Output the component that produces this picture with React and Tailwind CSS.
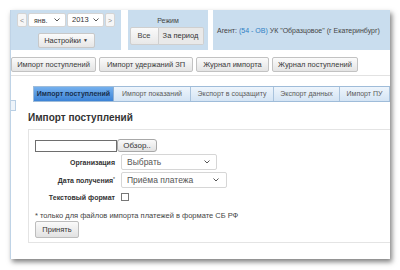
const Chevron = ({ className = "" }) => (
  <svg width="6" height="4" viewBox="0 0 6 4" className={className}>
    <path d="M0.5 0.5 L3 3 L5.5 0.5" fill="none" stroke="#555" strokeWidth="1" />
  </svg>
);

const ToolBtn = ({ children, w }) => (
  <div
    className={`h-[15px] ${w} flex items-center justify-center border border-[#c2c2c2] rounded-[2px] bg-gradient-to-b from-[#fbfbfb] to-[#e4e4e4] text-[7.5px] text-[#3a3a3a] leading-none`}
  >
    {children}
  </div>
);

const Tab = ({ children, w, active }) =>
  active ? (
    <div
      className={`${w} h-full flex items-center justify-center bg-gradient-to-b from-[#74b0ee] to-[#3c83d6] text-[7px] font-bold text-[#17304f] border-r border-[#8fb0d2]`}
    >
      {children}
    </div>
  ) : (
    <div
      className={`${w} h-full flex items-center justify-center text-[7px] text-[#5a5a5a] border-r border-[#a9c3dd] shrink-0`}
    >
      {children}
    </div>
  );

export default function App() {
  return (
    <div
      className="w-[400px] h-[270px] bg-white overflow-hidden pt-[10px] pl-[10px]"
      style={{ fontFamily: '"Liberation Sans", Arial, sans-serif' }}
    >
      <div className="w-[380px] h-[249px] bg-white flex flex-col shadow-[2px_3px_5px_rgba(0,0,0,0.5)] relative border-l border-[#bfd3e6]">
        {/* header */}
        <div className="h-[40px] flex shrink-0">
          <div className="w-[110px] bg-[#c9ddee] flex flex-col items-center pt-[3px]">
            <div className="flex items-center h-[14px] gap-[1px] w-[98px]">
              <div className="w-[10px] h-[14px] bg-[#f6f6f6] border border-[#d4d4d4] rounded-[2px] flex items-center justify-center text-[7px] text-[#888] leading-none">
                &lt;
              </div>
              <div className="w-[38px] h-[14px] bg-white border border-[#d4d4d4] rounded-[2px] flex items-center justify-between px-[5px] text-[7px] text-[#333] leading-none">
                <span>янв.</span>
                <Chevron />
              </div>
              <div className="w-[37px] h-[14px] bg-white border border-[#d4d4d4] rounded-[2px] flex items-center justify-between px-[4px] text-[7.5px] text-[#333] leading-none">
                <span>2013</span>
                <Chevron />
              </div>
              <div className="w-[10px] h-[14px] bg-[#f6f6f6] border border-[#d4d4d4] rounded-[2px] flex items-center justify-center text-[7px] text-[#888] leading-none">
                &gt;
              </div>
            </div>
            <div className="mt-[6px] w-[57px] h-[15px] bg-gradient-to-b from-[#fbfbfb] to-[#e6e6e6] border border-[#c8c8c8] rounded-[2px] flex items-center justify-center text-[7.5px] text-[#333] leading-none">
              Настройки
              <span className="ml-[2px] text-[5px]">▼</span>
            </div>
          </div>
          <div className="w-[7px] bg-white" />
          <div className="w-[80px] bg-[#c9ddee] flex flex-col items-center">
            <div className="mt-[6px] h-[9px] text-[7px] text-[#444] leading-[9px]">Режим</div>
            <div className="flex mt-[2px] h-[18px] ml-[-3px]">
              <div className="w-[29px] h-full bg-gradient-to-b from-[#fafafa] to-[#e8e8e8] border border-[#cfcfcf] rounded-l-[2px] flex items-center justify-center text-[7.5px] text-[#444] leading-none">
                Все
              </div>
              <div className="w-[45px] h-full bg-[#e9e9e9] border border-l-0 border-[#cfcfcf] rounded-r-[2px] flex items-center justify-center text-[7.5px] text-[#333] leading-none">
                За период
              </div>
            </div>
          </div>
          <div className="w-[5px] bg-white" />
          <div className="flex-1 bg-[#c9ddee] flex items-center pl-[4px] text-[7px] text-[#444] leading-none whitespace-nowrap">
            Агент:&nbsp;<span className="text-[#2f7fc4]">(54 - ОВ)</span>&nbsp;УК "Образцовое" (г Екатеринбург)
          </div>
        </div>

        {/* toolbar */}
        <div className="mt-[7px] flex gap-[3px] shrink-0">
          <ToolBtn w="w-[85px]">Импорт поступлений</ToolBtn>
          <ToolBtn w="w-[94px]">Импорт удержаний ЗП</ToolBtn>
          <ToolBtn w="w-[73px]">Журнал импорта</ToolBtn>
          <ToolBtn w="w-[86px]">Журнал поступлений</ToolBtn>
        </div>
        <div className="mt-[3px] border-b border-[#e2e2e2] shrink-0" />

        {/* body */}
        <div className="flex flex-1 min-h-0">
          <div className="w-[5px] flex flex-col pt-[24px]">
            <div className="w-[5px] h-[11px] border border-l-0 border-[#b9cfe4] bg-[#eef4fa]" />
          </div>
          <div className="flex-1 flex flex-col min-w-0">
            {/* tabs */}
            <div className="mt-[10px] ml-[17px] h-[16px] flex bg-gradient-to-b from-[#eef5fc] to-[#d4e4f4] border border-r-0 border-[#9fbcd9] overflow-hidden shrink-0">
              <Tab w="w-[84px]" active>
                Импорт поступлений
              </Tab>
              <Tab w="w-[77px]">Импорт показаний</Tab>
              <Tab w="w-[83px]">Экспорт в соцзащиту</Tab>
              <Tab w="w-[66px]">Экспорт данных</Tab>
              <Tab w="w-[50px]">Импорт ПУ</Tab>
            </div>

            <div className="ml-[12px] mt-[10px] h-[12px] text-[10px] font-bold text-[#333] leading-[12px] shrink-0">
              Импорт поступлений
            </div>

            <div className="ml-[12px] mt-[5px] h-[114px] border border-r-0 border-[#e4e4e4] pl-[6px] pt-[9px] flex flex-col shrink-0">
              <div className="flex items-center h-[13px]">
                <div className="w-[82px] h-[12px] border border-[#6e6e6e] bg-white" />
                <div className="w-[40px] h-[13px] bg-gradient-to-b from-[#fafafa] to-[#e2e2e2] border border-[#a8a8a8] rounded-[3px] flex items-center justify-center text-[8px] text-[#333] leading-none">
                  Обзор..
                </div>
              </div>

              <div className="flex items-center mt-[2px] h-[16px]">
                <div className="w-[80px] text-right text-[7px] font-bold text-[#333] leading-none">Организация</div>
                <div className="ml-[6px] w-[96px] h-[16px] border border-[#d6d6d6] rounded-[2px] bg-white flex items-center justify-between pl-[5px] pr-[6px] text-[8.5px] text-[#555] leading-none">
                  <span>Выбрать</span>
                  <Chevron />
                </div>
              </div>

              <div className="flex items-center mt-[2px] h-[16px]">
                <div className="w-[80px] text-right text-[7px] font-bold text-[#333] leading-none">
                  Дата получения<span className="font-normal align-top text-[5px]">*</span>
                </div>
                <div className="ml-[6px] w-[106px] h-[16px] border border-[#d6d6d6] rounded-[2px] bg-white flex items-center justify-between pl-[5px] pr-[7px] text-[8.5px] text-[#555] leading-none">
                  <span>Приёма платежа</span>
                  <Chevron />
                </div>
              </div>

              <div className="flex items-center mt-[3px] h-[12px]">
                <div className="w-[80px] text-right text-[7px] font-bold text-[#333] leading-none">Текстовый формат</div>
                <div className="ml-[6px] w-[8px] h-[8px] border border-[#777] bg-white" />
              </div>

              <div className="mt-[8px] h-[9px] text-[7.5px] text-[#444] leading-[9px] whitespace-nowrap">
                * только для файлов импорта платежей в формате СБ РФ
              </div>
              <div className="mt-[1px] w-[44px] h-[17px] bg-gradient-to-b from-[#fafafa] to-[#e2e2e2] border border-[#bdbdbd] rounded-[2px] flex items-center justify-center text-[7.5px] text-[#333] leading-none">
                Принять
              </div>
            </div>
          </div>
        </div>
      </div>
    </div>
  );
}
